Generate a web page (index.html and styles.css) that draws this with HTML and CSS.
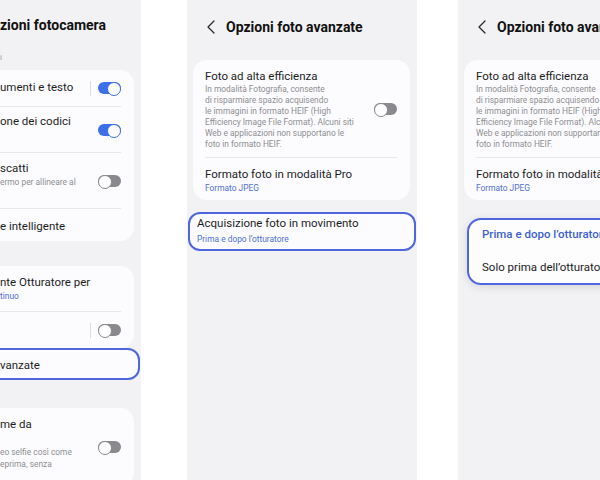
FILE: index.html
```html
<!DOCTYPE html>
<html lang="it">
<head>
<meta charset="utf-8">
<title>Opzioni foto avanzate</title>
<link rel="stylesheet" href="styles.css">
</head>
<body>
<div class="stage">

  <section class="screen screen--main">
    <header class="topbar topbar--cut">
      <h1 class="topbar__title">zioni fotocamera</h1>
    </header>
    <p class="section-label">i</p>
    <div class="card card--cut">
      <div class="row">
        <div class="row__text r-a"><div class="row__title">umenti e testo</div></div>
        <span class="vsep"></span><span class="toggle toggle--on"></span>
      </div>
      <div class="row">
        <div class="row__text r-b"><div class="row__title">one dei codici</div></div>
        <span class="toggle toggle--on"></span>
      </div>
      <div class="row">
        <div class="row__text r-c"><div class="row__title">scatti</div><div class="row__desc">ermo per allineare al</div></div>
        <span class="toggle"></span>
      </div>
      <div class="row">
        <div class="row__text r-d"><div class="row__title">e intelligente</div></div>
      </div>
    </div>
    <div class="card card--cut card--gap">
      <div class="row">
        <div class="row__text r-e"><div class="row__title">nte Otturatore per</div><div class="row__value">tinuo</div></div>
      </div>
      <div class="row">
        <div class="row__text r-f"></div>
        <span class="vsep"></span><span class="toggle"></span>
      </div>
    </div>
    <div class="picked-cut">
      <div class="row__title">vanzate</div>
    </div>
    <div class="card card--cut card--gap2">
      <div class="row">
        <div class="row__text r-g">
          <div class="row__title title--spaced">me da</div>
          <div class="row__desc">eo selfie così come<br>eprima, senza</div>
        </div>
        <span class="toggle"></span>
      </div>
    </div>
  </section>

  <section class="screen screen--second">
    <header class="topbar">
      <svg class="topbar__back" width="8" height="14" viewBox="0 0 8 14"><polyline points="7,1 1,7 7,13" fill="none" stroke="#2a2a2a" stroke-width="1.3" stroke-linecap="round" stroke-linejoin="round"/></svg>
      <h1 class="topbar__title">Opzioni foto avanzate</h1>
    </header>
    <div class="card">
      <div class="row">
        <div class="row__text r-heif">
          <div class="row__title">Foto ad alta efficienza</div>
          <div class="row__desc row__desc--long">In modalità Fotografia, consente<br>di risparmiare spazio acquisendo<br>le immagini in formato HEIF (High<br>Efficiency Image File Format). Alcuni siti<br>Web e applicazioni non supportano le<br>foto in formato HEIF.</div>
        </div>
        <span class="toggle"></span>
      </div>
      <div class="row">
        <div class="row__text r-pro">
          <div class="row__title">Formato foto in modalità Pro</div>
          <div class="row__value">Formato JPEG</div>
        </div>
      </div>
    </div>
    <div class="picked">
      <div class="row__title picked__title">Acquisizione foto in movimento</div>
      <div class="row__value picked__value">Prima e dopo l’otturatore</div>
    </div>
  </section>

  <section class="screen screen--third">
    <header class="topbar">
      <svg class="topbar__back" width="8" height="14" viewBox="0 0 8 14"><polyline points="7,1 1,7 7,13" fill="none" stroke="#2a2a2a" stroke-width="1.3" stroke-linecap="round" stroke-linejoin="round"/></svg>
      <h1 class="topbar__title">Opzioni foto avanzate</h1>
    </header>
    <div class="card">
      <div class="row">
        <div class="row__text r-heif">
          <div class="row__title">Foto ad alta efficienza</div>
          <div class="row__desc row__desc--long">In modalità Fotografia, consente<br>di risparmiare spazio acquisendo<br>le immagini in formato HEIF (High<br>Efficiency Image File Format). Alcuni siti<br>Web e applicazioni non supportano le<br>foto in formato HEIF.</div>
        </div>
        <span class="toggle"></span>
      </div>
      <div class="row">
        <div class="row__text r-pro">
          <div class="row__title">Formato foto in modalità Pro</div>
          <div class="row__value">Formato JPEG</div>
        </div>
      </div>
    </div>
    <div class="menu">
      <div class="menu__item menu__item--active">Prima e dopo l’otturatore</div>
      <div class="menu__item">Solo prima dell’otturatore</div>
    </div>
  </section>

</div>
</body>
</html>
```

FILE: styles.css
```css
* { box-sizing: border-box; }

html, body {
  margin: 0;
  padding: 0;
  background: #ffffff;
}

body {
  font-family: Roboto, "Noto Sans", "Liberation Sans", sans-serif;
  color: #1c1c1e;
}

.stage {
  display: flex;
  align-items: flex-start;
  width: 600px;
  height: 480px;
  overflow: hidden;
}

.screen {
  position: relative;
  flex: 0 0 230px;
  height: 480px;
  padding: 0 7px 0 6px;
  background: #f2f2f4;
  overflow: hidden;
}

.screen--main {
  flex-basis: 141px;
  padding-left: 0;
}

.screen--second { margin-left: 46px; }
.screen--third { margin-left: 41px; }

/* header */
.topbar {
  display: flex;
  align-items: center;
  gap: 11px;
  height: 60px;
  padding: 0 0 6px 14px;
}

.topbar--cut {
  height: 50px;
  padding: 0;
}

.topbar__back { flex: none; }

.topbar__title {
  margin: 0;
  font-size: 14px;
  font-weight: 700;
  line-height: 20px;
  color: #111;
  white-space: nowrap;
}

.section-label {
  margin: 0;
  height: 20px;
  font-size: 8px;
  line-height: 16px;
  color: #9a9a9c;
}

/* cards */
.card {
  background: #fcfcfe;
  border-radius: 14px;
  padding: 0 13px 0 12px;
}

.card--cut {
  margin-left: -20px;
  padding-left: 20px;
}

.card--gap { margin-top: 25px; }
.card--gap2 { margin-top: 28px; }

.row {
  display: flex;
  align-items: center;
  gap: 7px;
}

.row + .row { border-top: 1px solid #e8e8ea; }

.row__text {
  flex: 1;
  min-width: 0;
  white-space: nowrap;
}

.row__title {
  font-size: 11.5px;
  line-height: 15px;
  color: #1c1c1e;
}

.title--spaced { margin-bottom: 14px; }

.row__desc {
  font-size: 8.4px;
  line-height: 12px;
  color: #8e8e92;
}

.row__desc--long { line-height: 11px; }

.row__value {
  font-size: 8.4px;
  line-height: 12px;
  color: #4f6fd6;
}

/* row heights (padding on the text block so toggles centre on the whole row) */
.r-a { padding: 10px 0 11px; }
.r-b { padding: 7px 0 23px; }
.r-c { padding: 8px 0 20px; }
.r-d { padding: 10px 0 7px; }
.r-e { padding: 9px 0 9px; }
.r-f { height: 36px; }
.r-g { padding: 9px 0 4px; }
.r-g .row__desc { padding-bottom: 12px; }
.r-heif { padding: 9px 0 7px; }
.r-pro { padding: 9px 0 6px; }

/* separators & toggles */
.vsep {
  flex: none;
  width: 1px;
  height: 15px;
  background: #dcdce0;
}

.toggle {
  position: relative;
  flex: none;
  width: 23px;
  height: 12px;
  border-radius: 6px;
  background: #8a8a8e;
}

.toggle::after {
  content: "";
  position: absolute;
  top: 0;
  left: 0;
  width: 12px;
  height: 12px;
  border-radius: 50%;
  border: 1.5px solid #8a8a8e;
  background: #fff;
}

.toggle--on { background: #3d6fe8; }

.toggle--on::after {
  left: auto;
  right: 0;
  border-color: #3d6fe8;
}

/* selected row */
.picked {
  margin: 12px -6px 0 -5px;
  padding: 1px 9px 4px 7px;
  border: 2px solid #4f66dc;
  border-radius: 12px;
  background: #fcfcfe;
}

.picked__title { line-height: 16px; }
.picked__value { margin-top: 2px; }

.picked-cut {
  margin: 0 -6px 0 -20px;
  padding: 8px 9px 5px 18px;
  border: 2px solid #4f66dc;
  border-radius: 12px;
  background: #fcfcfe;
  white-space: nowrap;
}

/* popup menu */
.menu {
  position: absolute;
  top: 218px;
  left: 9px;
  width: 220px;
  display: flex;
  flex-direction: column;
  gap: 18px;
  padding: 7px 13px 8px;
  border: 2px solid #5066de;
  border-radius: 14px;
  background: #fdfdfe;
  box-shadow: 0 2px 8px rgba(0, 0, 0, 0.12);
}

.menu__item {
  font-size: 11.5px;
  line-height: 15px;
  color: #1c1c1e;
  white-space: nowrap;
}

.menu__item--active {
  color: #3e5fcf;
  font-weight: 500;
}
```
